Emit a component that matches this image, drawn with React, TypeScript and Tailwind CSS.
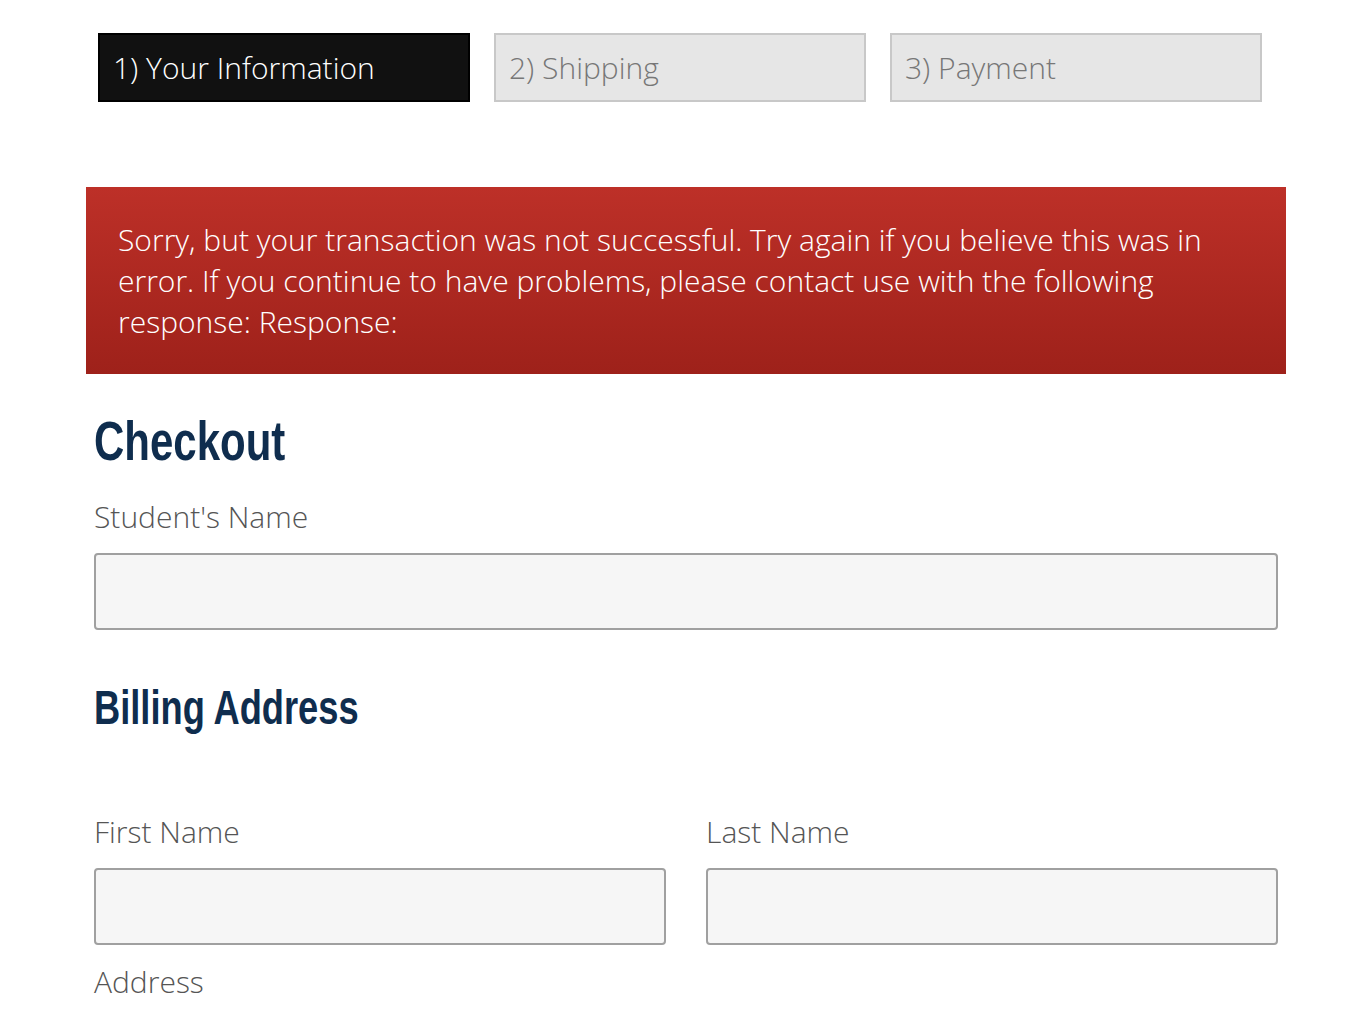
export default function App() {
  const body = { fontFamily: '"Open Sans", "Noto Sans", sans-serif' }
  const head = { fontFamily: '"Liberation Sans", Arial, sans-serif' }

  return (
    <main className="min-h-screen bg-white" style={body}>
      <div className="ml-[86px] w-[1200px] pt-[33px]">
        {/* steps */}
        <div className="flex gap-6 pl-3">
          <div className="flex h-[69px] w-[372px] items-center border-2 border-black bg-[#111111] px-[13px] text-[30px] font-light text-white">
            1) Your Information
          </div>
          <div className="flex h-[69px] w-[372px] items-center border-2 border-[#c8c8c8] bg-[#e6e6e6] px-[13px] text-[30px] font-light text-[#777777]">
            2) Shipping
          </div>
          <div className="flex h-[69px] w-[372px] items-center border-2 border-[#c8c8c8] bg-[#e6e6e6] px-[13px] text-[30px] font-light text-[#777777]">
            3) Payment
          </div>
        </div>

        {/* error */}
        <div className="mt-[85px] bg-gradient-to-b from-[#bd3028] to-[#9e211a] px-8 pt-[32px] pb-[32px] text-[30px] font-light leading-[41px] text-white">
          Sorry, but your transaction was not successful. Try again if you believe this was in error. If you
          continue to have problems, please contact use with the following response: Response:
        </div>

        <div className="px-2">
          <h1
            className="mt-[37px] block w-fit origin-left scale-x-[0.75] text-[56px] leading-[60px] font-bold text-[#0f2d4e]"
            style={head}
          >
            Checkout
          </h1>
          <label className="mt-[26px] block text-[30px] font-light leading-[40px] text-[#555555]">Student's Name</label>
          <input className="mt-[16px] block h-[77px] w-full rounded border-2 border-[#a0a0a0] bg-[#f6f6f6]" />

          <h2
            className="mt-[51px] block w-fit origin-left scale-x-[0.74] text-[49px] leading-[52px] font-bold text-[#0f2d4e]"
            style={head}
          >
            Billing Address
          </h2>

          <div className="mt-[79px] grid grid-cols-2 gap-x-10">
            <div>
              <label className="block text-[30px] font-light leading-[40px] text-[#555555]">First Name</label>
              <input className="mt-[16px] block h-[77px] w-full rounded border-2 border-[#a0a0a0] bg-[#f6f6f6]" />
            </div>
            <div>
              <label className="block text-[30px] font-light leading-[40px] text-[#555555]">Last Name</label>
              <input className="mt-[16px] block h-[77px] w-full rounded border-2 border-[#a0a0a0] bg-[#f6f6f6]" />
            </div>
          </div>
          <label className="mt-[17px] block text-[30px] font-light leading-[40px] text-[#555555]">Address</label>
          <input className="mt-[16px] block h-[77px] w-full rounded border-2 border-[#a0a0a0] bg-[#f6f6f6]" />
        </div>
      </div>
    </main>
  )
}
